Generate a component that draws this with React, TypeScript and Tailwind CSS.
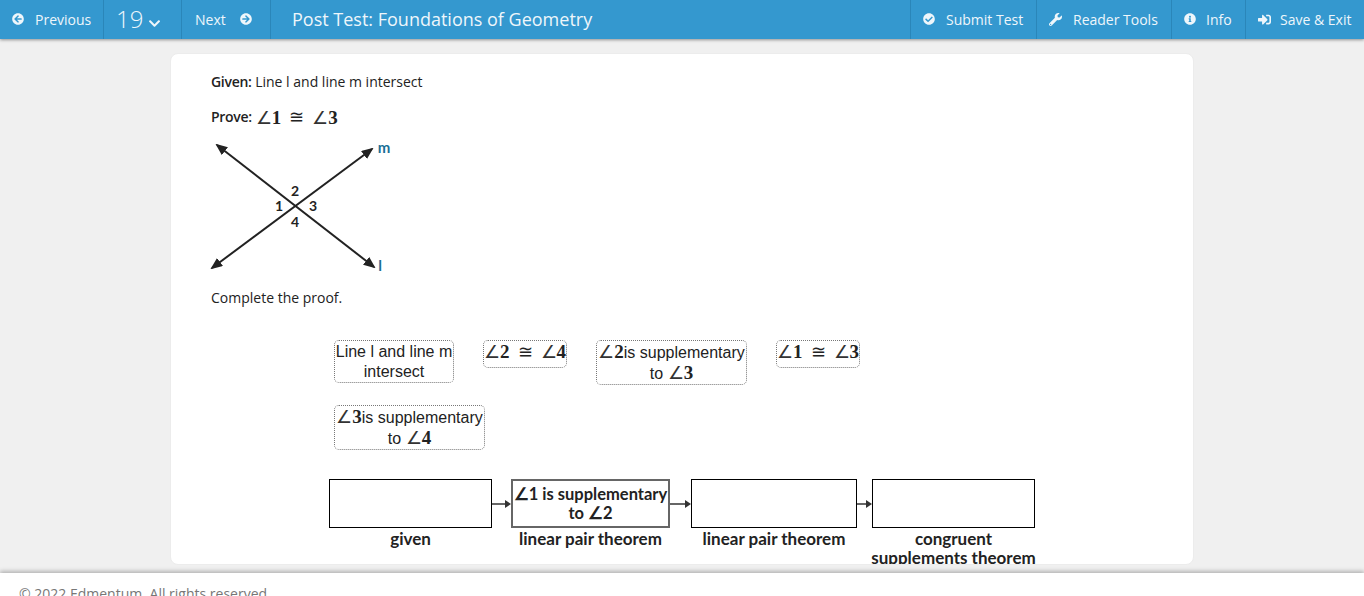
import React from 'react';
import {
  FaArrowCircleLeft,
  FaArrowCircleRight,
  FaCheckCircle,
  FaChevronDown,
  FaInfoCircle,
  FaSignInAlt,
  FaWrench,
} from 'react-icons/fa';

function Angle({ n }: { n: string }) {
  return (
    <span className="font-['Liberation_Serif',serif] text-[19px] leading-none whitespace-nowrap">
      <span className="font-['DejaVu_Sans',sans-serif] text-[18px] font-extralight text-[#333]">∠</span>
      <span className="font-bold">{n}</span>
    </span>
  );
}

function Congruent({ a, b }: { a: string; b: string }) {
  return (
    <span className="inline-flex items-center gap-[8px] whitespace-nowrap">
      <Angle n={a} />
      <span className="font-['DejaVu_Sans',sans-serif] text-[18px] leading-none font-light">≅</span>
      <Angle n={b} />
    </span>
  );
}

function Chip({ w, children }: { w: string; children: React.ReactNode }) {
  return (
    <div className={`${w} border border-dotted border-[#777] rounded-[5px] text-center text-[16px] leading-[20px] text-[#222] font-['Liberation_Sans',sans-serif] pt-[1px]`}>
      {children}
    </div>
  );
}

function Diagram() {
  return (
    <svg width="190" height="140" viewBox="205 140 190 140" className="block">
      <defs>
        <marker id="tip" markerWidth="12" markerHeight="10" refX="10" refY="5" orient="auto-start-reverse" markerUnits="userSpaceOnUse">
          <path d="M0 0 L12 5 L0 10 Z" fill="#222" />
        </marker>
      </defs>
      <line x1="217" y1="145" x2="374" y2="267" stroke="#222" strokeWidth="2" markerStart="url(#tip)" markerEnd="url(#tip)" />
      <line x1="212" y1="268" x2="372" y2="149" stroke="#222" strokeWidth="2" markerStart="url(#tip)" markerEnd="url(#tip)" />
      <g fontFamily="Lato, sans-serif" fontWeight="700" fontSize="14" fill="#222" textAnchor="middle">
        <text x="295" y="196">2</text>
        <text x="279" y="211">1</text>
        <text x="313" y="211">3</text>
        <text x="295" y="227">4</text>
      </g>
      <text x="384" y="153" fontFamily="Lato, sans-serif" fontWeight="700" fontSize="15" fill="#1a6f96" textAnchor="middle">m</text>
      <text x="380" y="271" fontFamily="Lato, sans-serif" fontWeight="700" fontSize="15" fill="#1a6f96" textAnchor="middle">l</text>
    </svg>
  );
}

function Arrow({ w }: { w: string }) {
  return (
    <div className={`${w} shrink-0 h-[49px] flex items-center`}>
      <div className="flex-1 h-[2px] bg-[#666]" />
      <div className="w-0 h-0 border-y-[4px] border-y-transparent border-l-[6px] border-l-[#333]" />
    </div>
  );
}

function FlowStep({ w, box, label, children }: { w: string; box: string; label: React.ReactNode; children?: React.ReactNode }) {
  return (
    <div className={`${w} shrink-0 flex flex-col items-center`}>
      <div className={`w-full h-[49px] bg-white flex items-center justify-center text-center ${box}`}>{children}</div>
      <div className="mt-[1px] text-[17px] leading-[19px] font-bold text-center text-[#222] font-['Lato',sans-serif] whitespace-nowrap">
        {label}
      </div>
    </div>
  );
}

const navItem = 'flex items-center h-full pb-[1px] text-[14px] text-[#eef6fb]';

export default function App() {
  return (
    <div className="h-[596px] overflow-hidden flex flex-col bg-[#f0f0f0] font-['Open_Sans',sans-serif]">
      {/* Header */}
      <header className="h-[39px] shrink-0 bg-[#3498cf] shadow-[0_1px_3px_rgba(0,0,0,0.4)] flex items-center relative z-10">
        <div className={`${navItem} w-[104px] border-r border-[#2a86b9] pl-[12px] gap-[11px]`}>
          <FaArrowCircleLeft className="w-[12px] h-[12px]" />
          <span>Previous</span>
        </div>
        <div className={`${navItem} w-[78px] border-r border-[#2a86b9] pl-[12px]`}>
          <span className="text-[24px] font-light">19</span>
          <FaChevronDown className="w-[13px] h-[13px] ml-[5px] mt-[8px]" />
        </div>
        <div className={`${navItem} w-[89px] border-r border-[#2a86b9] pl-[13px] gap-[14px]`}>
          <span>Next</span>
          <FaArrowCircleRight className="w-[12px] h-[12px]" />
        </div>
        <div className="pl-[21px] text-[18px] text-[#eef6fb] flex-1">Post Test: Foundations of Geometry</div>
        <div className={`${navItem} w-[126px] border-l border-[#2a86b9] pl-[12px] gap-[11px]`}>
          <FaCheckCircle className="w-[12px] h-[12px]" />
          <span>Submit Test</span>
        </div>
        <div className={`${navItem} w-[135px] border-l border-[#2a86b9] pl-[12px] gap-[11px]`}>
          <FaWrench className="w-[13px] h-[13px]" />
          <span>Reader Tools</span>
        </div>
        <div className={`${navItem} w-[74px] border-l border-[#2a86b9] pl-[12px] gap-[10px]`}>
          <FaInfoCircle className="w-[12px] h-[12px]" />
          <span>Info</span>
        </div>
        <div className={`${navItem} w-[119px] border-l border-[#2a86b9] pl-[12px] gap-[9px]`}>
          <FaSignInAlt className="w-[13px] h-[13px]" />
          <span>Save &amp; Exit</span>
        </div>
      </header>

      {/* Content */}
      <main className="flex-1 min-h-0 pt-[14px] px-[170px] pb-[8px]">
        <div className="h-full w-[1024px] bg-white rounded-[8px] border border-[#ececec] pl-[40px] text-[14px] text-[#222] overflow-hidden">
          <p className="mt-[18px] h-[20px] leading-[20px]">
            <span className="font-semibold tracking-[-0.3px]">Given:</span> Line l and line m intersect
          </p>
          <p className="mt-[15px] h-[20px] leading-[20px] flex items-center gap-[4px]">
            <span className="font-semibold tracking-[-0.3px]">Prove:</span>
            <Congruent a="1" b="3" />
          </p>
          <div className="mt-[13px] -ml-[6px]">
            <Diagram />
          </div>
          <p className="mt-[8px] h-[20px] leading-[20px]">Complete the proof.</p>

          <div className="mt-[32px] ml-[123px] w-[560px] flex flex-wrap items-start gap-x-[29px] gap-y-[20px]">
            <Chip w="w-[120px]">
              Line l and line m intersect
            </Chip>
            <Chip w="w-[84px] h-[28px]">
              <Congruent a="2" b="4" />
            </Chip>
            <Chip w="w-[151px]">
              <Angle n="2" />is supplementary to <Angle n="3" />
            </Chip>
            <Chip w="w-[84px] h-[28px]">
              <Congruent a="1" b="3" />
            </Chip>
            <Chip w="w-[151px]">
              <Angle n="3" />is supplementary to <Angle n="4" />
            </Chip>
          </div>

          <div className="mt-[29px] ml-[118px] flex items-start">
            <FlowStep w="w-[163px]" box="border border-black" label="given" />
            <Arrow w="w-[19px]" />
            <FlowStep w="w-[159px]" box="border-2 border-[#666]" label="linear pair theorem">
              <span className="text-[16.5px] leading-[19px] font-bold font-['Lato',sans-serif] text-[#222]">
                ∠1 is supplementary
                <br />
                to ∠2
              </span>
            </FlowStep>
            <Arrow w="w-[21px]" />
            <FlowStep w="w-[166px]" box="border border-black" label="linear pair theorem" />
            <Arrow w="w-[15px]" />
            <FlowStep
              w="w-[163px]"
              box="border border-black"
              label={
                <>
                  congruent
                  <br />
                  supplements theorem
                </>
              }
            />
          </div>
        </div>
      </main>

      {/* Footer */}
      <footer className="h-[23px] shrink-0 bg-white shadow-[0_-2px_4px_rgba(0,0,0,0.25)] pl-[19px] pt-[11px] text-[14px] leading-[20px] text-[#777] overflow-hidden relative z-10">
        © 2022 Edmentum. All rights reserved.
      </footer>
    </div>
  );
}
